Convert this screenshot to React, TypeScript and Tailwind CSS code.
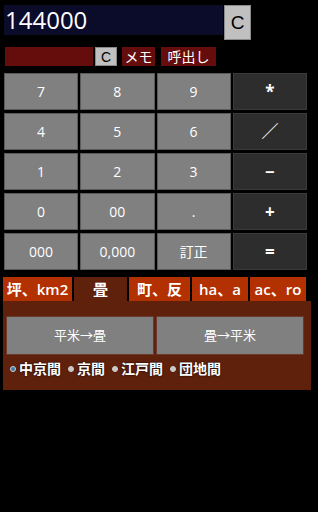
import React from 'react';

const KEYS = [
  ['7', '8', '9', '*'],
  ['4', '5', '6', '／'],
  ['1', '2', '3', '−'],
  ['0', '00', '.', '+'],
  ['000', '0,000', '訂正', '='],
];

const TABS = ['坪、km2', '畳', '町、反', 'ha、a', 'ac、ro'];
const RADIOS = ['中京間', '京間', '江戸間', '団地間'];

export default function App() {
  const font = { fontFamily: '"Open Sans", "Noto Sans CJK JP", sans-serif' };

  return (
    <div className="w-[318px] h-[512px] bg-black text-white overflow-hidden" style={font}>
      {/* Display */}
      <div className="flex items-start pt-[5px] pl-[4px]">
        <div className="w-[219px] h-[30px] bg-[#0b0b2a] flex items-center pl-[1px] text-[24px] leading-none">
          144000
        </div>
        <button className="ml-[1px] w-[27px] h-[35px] bg-[#c0c0c0] border border-[#8a8a8a] text-black text-[19px] font-['Liberation_Sans'] leading-none">
          C
        </button>
      </div>

      {/* Memory row */}
      <div className="flex items-center mt-[7px] pl-[5px] h-[19px]">
        <div className="w-[88px] h-[19px] bg-[#650c0c]" />
        <button className="ml-[2px] w-[22px] h-[19px] bg-[#c0c0c0] border border-[#8a8a8a] text-black text-[14px] font-['Liberation_Sans'] leading-none">
          C
        </button>
        <button className="ml-[5px] w-[33px] h-[19px] bg-[#650c0c] text-[14px] leading-none">メモ</button>
        <button className="ml-[6px] w-[55px] h-[19px] bg-[#650c0c] text-[14px] leading-none">呼出し</button>
      </div>

      {/* Keypad */}
      <div className="grid grid-cols-4 gap-x-[2px] gap-y-[3px] ml-[4px] mt-[7px] w-[303px]">
        {KEYS.flat().map((k, i) => (
          <button
            key={i}
            className={
              (i % 4 === 3
                ? 'bg-[#2d2d2d] border-[#3a3a3a] text-[17px] font-bold '
                : 'bg-[#808080] border-[#5a5a5a] text-[14px] ') +
              'h-[37px] border text-white leading-none'
            }
          >
            {k}
          </button>
        ))}
      </div>

      {/* Tabs */}
      <div className="flex ml-[3px] mt-[7px] gap-[2px] h-[24px] w-[308px]">
        {TABS.map((t, i) => (
          <div
            key={t}
            className={
              (i === 1 ? 'bg-[#5f200c] w-[53px] ' : 'bg-[#b33100] ') +
              (i === 0 ? 'w-[69px] ' : i === 2 ? 'w-[61px] ' : i > 2 ? 'w-[56px] ' : '') +
              'flex items-center justify-center text-[15px] font-semibold leading-none'
            }
          >
            {t}
          </div>
        ))}
      </div>

      {/* Panel */}
      <div className="ml-[3px] w-[308px] h-[89px] bg-[#5f200c] pt-[15px] pl-[3px]">
        <div className="flex gap-[2px]">
          <button className="w-[148px] h-[39px] bg-[#808080] border border-[#6a3a2a] text-[13px] leading-none">
            平米→畳
          </button>
          <button className="w-[148px] h-[39px] bg-[#808080] border border-[#6a3a2a] text-[13px] leading-none">
            畳→平米
          </button>
        </div>
        <div className="flex items-center mt-[7px] gap-[7px] pl-[4px]">
          {RADIOS.map((r, i) => (
            <label key={r} className="flex items-center gap-[3px] text-[14px] font-bold leading-none [text-shadow:0_0_2px_#000]">
              <span
                className={
                  (i === 0 ? 'bg-[#3f7aa8] ' : 'bg-[#c8c8c8] ') +
                  'w-[6px] h-[6px] rounded-full border border-[#d0d0d0]'
                }
              />
              {r}
            </label>
          ))}
        </div>
      </div>
    </div>
  );
}
